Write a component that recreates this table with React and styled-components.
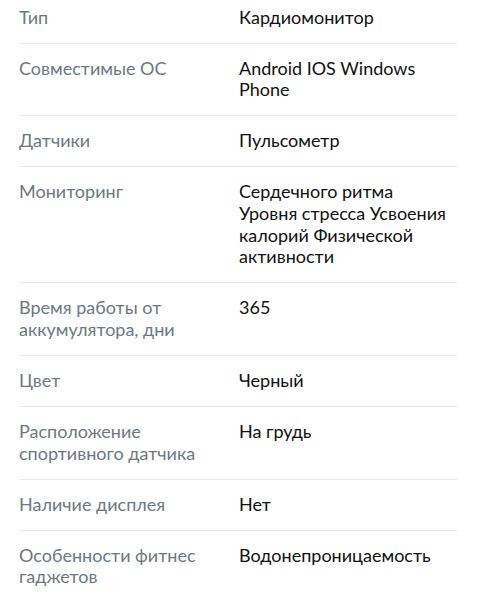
import React from 'react'
import styled, { createGlobalStyle } from 'styled-components'

const specs = [
	{ label: 'Тип', value: 'Кардиомонитор' },
	{ label: 'Совместимые ОС', value: 'Android IOS Windows Phone' },
	{ label: 'Датчики', value: 'Пульсометр' },
	{ label: 'Мониторинг', value: 'Сердечного ритма Уровня стресса Усвоения калорий Физической активности' },
	{ label: 'Время работы от аккумулятора, дни', value: '365' },
	{ label: 'Цвет', value: 'Черный' },
	{ label: 'Расположение спортивного датчика', value: 'На грудь' },
	{ label: 'Наличие дисплея', value: 'Нет' },
	{ label: 'Особенности фитнес гаджетов', value: 'Водонепроницаемость' },
]

export default function App() {
	return (
		<>
			<GlobalStyle />
			<SpecList>
				{specs.map((item, index) => (
					<SpecRow key={`spec--${index}`} last={index === specs.length - 1}>
						<Label>{item.label}</Label>
						<Value>{item.value}</Value>
					</SpecRow>
				))}
			</SpecList>
		</>
	)
}

const GlobalStyle = createGlobalStyle`
	html, body {
		margin: 0;
		padding: 0;
		background: #ffffff;
	}
	body {
		font-family: 'Lato', 'Noto Sans', sans-serif;
		-webkit-font-smoothing: antialiased;
	}
`

const SpecList = styled.dl`
	margin: 0;
	padding: 0 20px 0 19px;
	width: 477px;
	box-sizing: border-box;
`

const SpecRow = styled.div`
	display: grid;
	grid-template-columns: 220px 1fr;
	padding: 14px 0 14.3px;
	border-bottom: ${(p) => (p.last ? 'none' : '1px solid #e6eaef')};

	&:first-child {
		padding-top: 6.5px;
	}
`

const Label = styled.dt`
	margin: 0;
	padding-right: 16px;
	font-size: 18px;
	line-height: 21.7px;
	color: #6d7881;
`

const Value = styled.dd`
	margin: 0;
	max-width: 213px;
	font-size: 18px;
	line-height: 21.7px;
	color: #111111;
`
